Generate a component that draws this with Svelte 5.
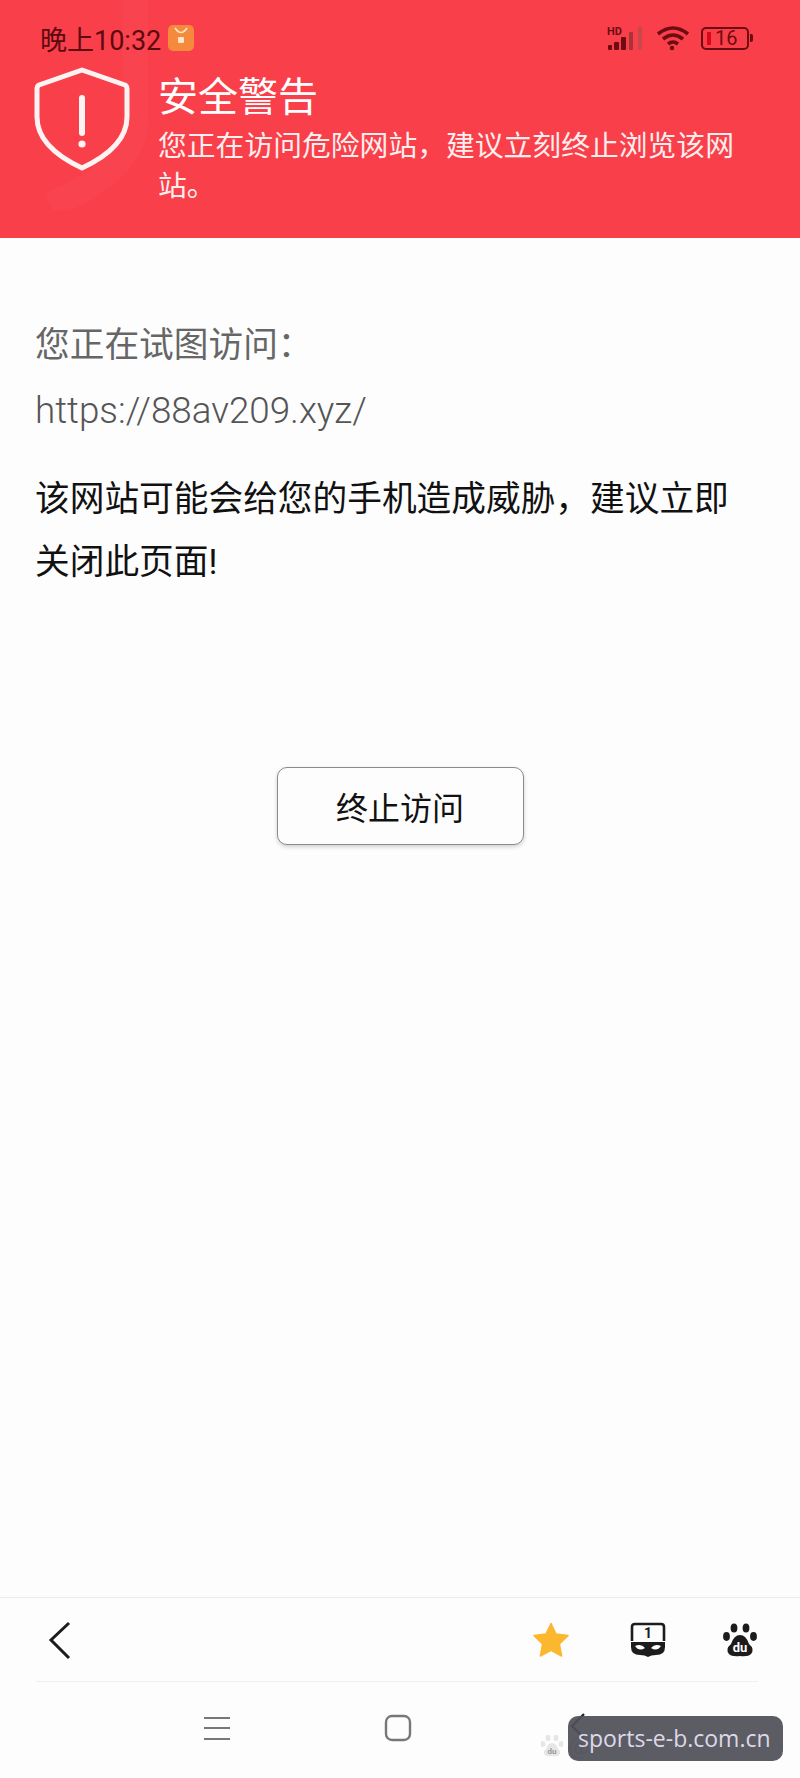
<script>
    // full-width punctuation, written as escapes so it survives copying
    const comma = "\uFF0C";
    const colon = "\uFF1A";
    const warning = "您正在访问危险网站" + comma + "建议立刻终止浏览该网站。";
    const visiting = "您正在试图访问" + colon;
    const threat = "该网站可能会给您的手机造成威胁" + comma + "建议立即关闭此页面!";
</script>

<div class="page">
    <header class="banner">
        <svg class="ghost-shield" viewBox="0 0 130 210" width="130" height="210" fill="none" stroke="#ffffff" stroke-opacity="0.025" stroke-width="26">
            <path d="M115 0V120Q115 170 30 205" />
        </svg>
        <div class="status">
            <div class="status-left">
                <span class="time">晚上10:32</span>
                <svg class="app-badge" viewBox="0 0 26 26" width="26" height="26">
                    <rect width="26" height="26" rx="5" fill="#f58a3c" />
                    <path d="M7 3q6 9 12 0" fill="none" stroke="#fde3c8" stroke-width="1.6" />
                    <rect x="10" y="12" width="6" height="6" rx="1" fill="#fde3c8" />
                </svg>
            </div>
            <div class="status-right">
                <svg viewBox="0 0 38 24" width="38" height="24" fill="#6e0c12">
                    <text x="0" y="9" class="hd">HD</text>
                    <rect x="1" y="19" width="4" height="5" rx="1" />
                    <rect x="7" y="16" width="5" height="8" rx="1" />
                    <rect x="14" y="11" width="5" height="13" rx="1" />
                    <rect x="22" y="6" width="4" height="18" rx="1" fill="#a8343a" />
                    <rect x="31" y="1" width="4" height="23" rx="1" fill="#c9474d" />
                </svg>
                <svg class="wifi" viewBox="0 0 34 26" width="34" height="26" fill="none" stroke="#6e0c12" stroke-width="3.6">
                    <path d="M2 9q15-12 30 0" />
                    <path d="M7 14q10-8 20 0" />
                    <path d="M12 19q5-4 10 0" />
                    <circle cx="16" cy="23" r="2.2" fill="#6e0c12" stroke="none" />
                </svg>
                <div class="battery">
                    <div class="cell">
                        <span class="level"></span>
                        <span class="pct">16</span>
                    </div>
                    <span class="nub"></span>
                </div>
            </div>
        </div>
        <div class="alert">
            <svg class="shield" viewBox="0 0 96 104" width="96" height="104" fill="none" stroke="#fdf3f3" stroke-width="5" stroke-linejoin="round">
                <path d="M48 3 L91 18 Q93 19 93 22 V50 Q93 80 48 101 Q3 80 3 50 V22 Q3 19 5 18 Z" />
                <path d="M48 31V66" stroke-width="6" stroke-linecap="round" />
                <circle cx="48" cy="77" r="3.6" fill="#fdf3f3" stroke="none" />
            </svg>
            <div class="alert-text">
                <h1>安全警告</h1>
                <p>{warning}</p>
            </div>
        </div>
    </header>

    <main class="content">
        <p class="muted">{visiting}</p>
        <p class="muted url">https://88av209.xyz/</p>
        <p class="threat">{threat}</p>
        <div class="actions">
            <button class="stop">终止访问</button>
        </div>
    </main>

    <footer class="footer">
        <nav class="toolbar">
            <svg viewBox="0 0 24 40" width="24" height="40" fill="none" stroke="#1c1c1c" stroke-width="3">
                <path d="M21 3 L3 20 L21 38" />
            </svg>
            <div class="tools">
                <svg class="star" viewBox="0 0 36 36" width="36" height="36" fill="#fbb72e">
                    <path d="M18 1.5 L23 12 L35 13.6 L26.4 22 L28.6 34 L18 28.4 L7.4 34 L9.6 22 L1 13.6 L13 12 Z" stroke="#fbb72e" stroke-width="1.5" stroke-linejoin="round" />
                </svg>
                <svg viewBox="0 0 36 36" width="36" height="36">
                    <path d="M2 19V5Q2 2 5 2H31Q34 2 34 5V19" fill="none" stroke="#1c1c1c" stroke-width="2.6" />
                    <text x="18" y="16" class="tab-count">1</text>
                    <path d="M1 20H35V25Q35 33 26 33Q21 33 18 35Q15 33 10 33Q1 33 1 25Z" fill="#1c1c1c" />
                    <path d="M5 24Q11 21 15 26Q9 30 5 24ZM31 24Q25 21 21 26Q27 30 31 24Z" fill="#fff" />
                </svg>
                <svg viewBox="0 0 36 36" width="36" height="36" fill="#1c1c1c">
                    <ellipse cx="12" cy="6" rx="3.4" ry="4.6" />
                    <ellipse cx="24" cy="6" rx="3.4" ry="4.6" />
                    <ellipse cx="4.5" cy="14.5" rx="3.4" ry="4.4" />
                    <ellipse cx="31.5" cy="14.5" rx="3.4" ry="4.4" />
                    <path d="M18 13Q24 13 27 22Q33 27 29 32Q26 35 18 34Q10 35 7 32Q3 27 9 22Q12 13 18 13Z" />
                    <text x="18" y="30" class="du">du</text>
                </svg>
            </div>
        </nav>
        <nav class="sysbar">
            <svg viewBox="0 0 28 24" width="28" height="24" stroke="#777" stroke-width="2.2">
                <path d="M1 2H27M1 12H27M1 23H27" />
            </svg>
            <svg viewBox="0 0 28 28" width="28" height="28" fill="none" stroke="#777" stroke-width="2.4">
                <rect x="2" y="2" width="24" height="24" rx="6" />
            </svg>
            <svg class="sys-back" viewBox="0 0 16 28" width="16" height="28" fill="none" stroke="#222" stroke-width="2.4">
                <path d="M14 2 L2 14 L14 26" />
            </svg>
        </nav>
        <div class="source">
            <svg viewBox="0 0 24 24" width="24" height="24">
                <g fill="#e6e6e6">
                    <ellipse cx="8" cy="4" rx="2.4" ry="3.2" />
                    <ellipse cx="16" cy="4" rx="2.4" ry="3.2" />
                    <ellipse cx="3" cy="10" rx="2.4" ry="3" />
                    <ellipse cx="21" cy="10" rx="2.4" ry="3" />
                    <path d="M12 9Q16 9 18 15Q22 18 19 21Q17 23 12 22Q7 23 5 21Q2 18 6 15Q8 9 12 9Z" />
                </g>
                <text x="12" y="20" class="source-du">du</text>
            </svg>
            <span>@</span>
        </div>
        <div class="watermark">sports-e-b.com.cn</div>
    </footer>
</div>

<style>
    :global(body) {
        margin: 0;
        background: #fdfdfe;
    }

    .page {
        width: 800px;
        height: 1778px;
        display: flex;
        flex-direction: column;
        font-family: "Roboto", "Noto Sans CJK SC", sans-serif;
        overflow: hidden;
    }

    .banner {
        position: relative;
        height: 238px;
        flex: none;
        box-sizing: border-box;
        background: #f93f4a;
        padding: 22px 47px 0 34px;
        display: flex;
        flex-direction: column;
    }

    .ghost-shield {
        position: absolute;
        left: 20px;
        top: 0;
    }

    .status {
        position: relative;
        display: flex;
        align-items: center;
        justify-content: space-between;
        height: 32px;
    }

    .status-left,
    .status-right {
        display: flex;
        align-items: center;
    }

    .status-left {
        gap: 7px;
        padding-left: 6px;
    }

    .status-right {
        gap: 11px;
    }

    .time {
        font-size: 27px;
        color: #5c0a10;
    }

    .hd {
        font: 700 11px "Roboto", sans-serif;
    }

    .battery {
        display: flex;
        align-items: center;
        gap: 1px;
    }

    .cell {
        width: 48px;
        height: 23px;
        box-sizing: border-box;
        border: 2px solid #6e0c12;
        border-radius: 5px;
        display: flex;
        align-items: center;
        padding-left: 4px;
        gap: 4px;
    }

    .level {
        width: 4px;
        height: 13px;
        background: #d8081a;
    }

    .pct {
        font-size: 20px;
        line-height: 1;
        color: #6e0c12;
    }

    .nub {
        width: 3px;
        height: 8px;
        background: #6e0c12;
        border-radius: 0 2px 2px 0;
    }

    .alert {
        position: relative;
        display: flex;
        gap: 28px;
    }

    .alert-text {
        width: 590px;
        padding-top: 20px;
    }

    .shield {
        flex: none;
        margin-top: 13px;
    }

    h1 {
        margin: 0;
        font-size: 40px;
        font-weight: 400;
        line-height: 48px;
        color: #fff;
    }

    .alert-text p {
        margin: 4px 0 0;
        font-size: 28.8px;
        line-height: 40px;
        color: #fdeeee;
    }

    .content {
        flex: 1;
        padding: 75px 35px 0;
    }

    .content p {
        margin: 0;
    }

    .muted {
        font-size: 34.7px;
        line-height: 65px;
        color: #666;
    }

    .url {
        font-size: 36.8px;
        font-weight: 300;
        color: #555;
    }

    .threat {
        font-size: 34.7px;
        line-height: 63px;
        color: #111;
        padding: 25px 30px 0 0;
    }

    .actions {
        display: flex;
        justify-content: center;
        margin-top: 173px;
    }

    .stop {
        width: 247px;
        height: 78px;
        background: #fefdfd;
        border: 1px solid #8c8a88;
        border-radius: 10px;
        box-shadow: 0 2px 4px rgba(0, 0, 0, 0.18);
        font: inherit;
        font-size: 32px;
        color: #111;
    }

    .footer {
        position: relative;
        flex: none;
        height: 181px;
        box-sizing: border-box;
        border-top: 1px solid #ececec;
    }

    .toolbar {
        height: 84px;
        box-sizing: border-box;
        margin: 0 42px 0 36px;
        padding: 0 0 0 12px;
        border-bottom: 1px solid #f3eeee;
        display: flex;
        align-items: center;
        justify-content: space-between;
    }

    .tools {
        display: flex;
        align-items: center;
        gap: 56px;
    }

    .star {
        margin-right: 5px;
    }

    .tab-count {
        font: 700 14px "Roboto", sans-serif;
        text-anchor: middle;
        fill: #1c1c1c;
    }

    .du {
        font: 700 13px "Roboto", sans-serif;
        text-anchor: middle;
        fill: #fff;
    }

    .sysbar {
        display: flex;
        align-items: center;
        justify-content: center;
        gap: 153px;
        padding: 32px 11px 0 0;
    }

    .sys-back {
        margin-left: 5px;
        transform: translateY(-2px);
    }

    .source {
        position: absolute;
        left: 540px;
        bottom: 18px;
        display: flex;
        align-items: center;
        gap: 4px;
        font-size: 24px;
        color: #c4c4c4;
    }

    .source-du {
        font: 700 8px "Roboto", sans-serif;
        text-anchor: middle;
        fill: #999;
    }

    .watermark {
        position: absolute;
        right: 17px;
        bottom: 17px;
        width: 215px;
        height: 45px;
        box-sizing: border-box;
        background: rgba(80, 80, 88, 0.93);
        border-radius: 10px;
        padding-left: 10px;
        font: 23px/45px "Open Sans", sans-serif;
        color: #ded8e8;
        white-space: nowrap;
    }
</style>
